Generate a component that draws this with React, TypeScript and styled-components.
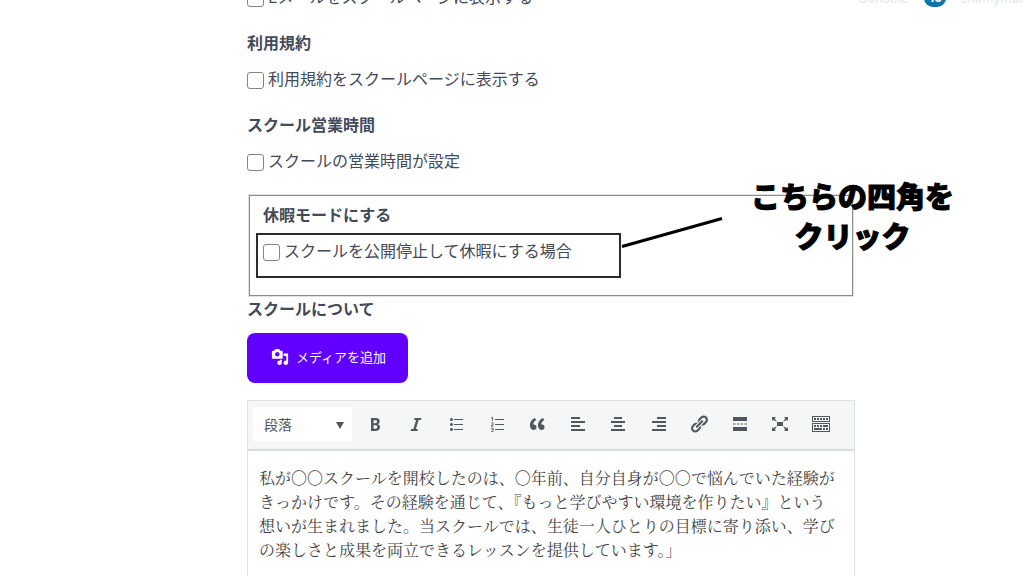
import React from "react";
import styled, { createGlobalStyle } from "styled-components";

const sans = `"Noto Sans CJK JP", "Noto Sans", sans-serif`;

const GlobalStyle = createGlobalStyle`
  *, *::before, *::after { box-sizing: border-box; }
  body { margin: 0; background: #fff; color: #434a5a; font: 16px/24px ${sans}; }
  button, select, input { font: inherit; color: inherit; }
`;

const Page = styled.div`
  position: relative;
  height: 100vh;
  overflow: hidden;
`;

const AccountBar = styled.header`
  position: absolute;
  top: -12px;
  left: 858px;
  display: flex;
  align-items: center;
  white-space: nowrap;
  color: #e6e6e6;
  font: 13px/20px Inter, sans-serif;
`;

const Badge = styled.span`
  width: 22px;
  height: 18px;
  margin: 0 14px 0 16px;
  border-radius: 9px;
  background: #0b76ae;
  color: #fff;
  text-align: center;
  font-size: 12px;
  font-weight: 700;
  line-height: 18px;
`;

const Form = styled.main`
  margin-top: -16px;
  padding: 0 169px 0 247px;
`;

const Group = styled.section`
  margin-bottom: 22px;
`;

const Heading = styled.h2`
  margin: 0;
  font-size: 16px;
  line-height: 24px;
  font-weight: 700;
`;

const CheckLabel = styled.label`
  display: flex;
  align-items: center;
  gap: 4px;
  height: 24px;
  white-space: nowrap;
`;

const CheckBox = styled.input`
  appearance: none;
  flex: none;
  width: 17px;
  height: 17px;
  margin: 5px 0 0;
  border: 1px solid #858585;
  border-radius: 3px;
  background: #fff;
`;

const SpacedRow = styled.div`
  margin-top: 12px;
`;

const VacationPanel = styled.section`
  position: relative;
  margin: 23px 2px 0;
  padding: 6px 7px 17px 6px;
  border: 1px solid #8c8c8c;
  outline: 1px solid #e2e2e2;

  ${Heading} { padding-left: 7px; }
`;

const Target = styled.div`
  position: relative;
  width: 365px;
  height: 45px;
  margin-top: 7px;
  padding: 3px 5px;
  border: 2px solid #2c2c2c;
`;

const Pointer = styled.svg`
  position: absolute;
  left: 363px;
  top: -20px;
`;

const Callout = styled.p`
  position: absolute;
  top: -21px;
  right: -102px;
  margin: 0;
  color: #000;
  text-align: center;
  white-space: nowrap;
  font-size: 29px;
  line-height: 40px;
  font-weight: 900;
  -webkit-text-stroke: 1px #000;
`;

const MediaButton = styled.button`
  display: flex;
  align-items: center;
  gap: 7px;
  height: 50px;
  margin: 13px 0 17px;
  padding: 0 22px 2px 24px;
  border: 0;
  border-radius: 8px;
  background: #6200ff;
  color: #fff;
  font-size: 13px;
`;

const Editor = styled.section`
  border: 1px solid #dfe1e2;
`;

const Toolbar = styled.div`
  display: flex;
  align-items: center;
  height: 50px;
  padding: 0 13px 2px 5px;
  border-bottom: 2px solid #d9dcdd;
  background: #f5f7f7;
`;

const FormatField = styled.div`
  position: relative;
  flex: none;
  width: 99px;
  margin-right: 3px;
`;

const FormatSelect = styled.select`
  appearance: none;
  display: block;
  width: 100%;
  height: 34px;
  padding: 0 11px;
  border: 0;
  background: #fff;
  color: #50575e;
  font-size: 14px;
`;

const Caret = styled.svg`
  position: absolute;
  right: 8px;
  top: 15px;
  pointer-events: none;
`;

const Tools = styled.div`
  display: grid;
  flex: 1;
  grid-template-columns: repeat(12, 1fr);
`;

const Tool = styled.button`
  display: grid;
  place-items: center;
  height: 34px;
  padding: 0;
  border: 0;
  background: none;
  color: #50575e;
`;

const Body = styled.p`
  min-height: 160px;
  margin: 0;
  padding: 15px 11px;
  color: #444;
  font: 16px/24px "Noto Serif CJK JP", "Noto Serif JP", "Noto Sans CJK JP", serif;
  white-space: nowrap;
`;

const tools: { name: string; path: string }[] = [
  { name: "太字", path: "M6 4v13h4.54c1.37 0 2.46-.33 3.26-1 .8-.66 1.2-1.58 1.2-2.77 0-.84-.17-1.51-.51-2.01s-.9-.85-1.67-1.03v-.09c.57-.1 1.02-.4 1.36-.9s.51-1.13.51-1.91c0-1.14-.39-1.98-1.17-2.5C12.75 4.26 11.5 4 9.78 4H6zm2.57 5.15V6.26h1.36c.73 0 1.27.11 1.61.32.34.22.51.58.51 1.07 0 .54-.16.92-.47 1.15s-.82.35-1.51.35h-1.5zm0 2.19h1.6c1.44 0 2.16.53 2.16 1.61 0 .6-.17 1.05-.51 1.34s-.86.43-1.57.43H8.57v-3.38z" },
  { name: "イタリック", path: "M14.78 6h-2.13l-2.8 9h2.12l-.62 2H4.6l.62-2h2.14l2.8-9H8.03l.62-2h6.75z" },
  { name: "番号なしリスト", path: "M5.5 7C4.67 7 4 6.33 4 5.5 4 4.68 4.67 4 5.5 4 6.32 4 7 4.68 7 5.5 7 6.33 6.32 7 5.5 7zM8 5h9v1H8V5zm-2.5 7c-.83 0-1.5-.67-1.5-1.5C4 9.68 4.67 9 5.5 9c.82 0 1.5.68 1.5 1.5 0 .83-.68 1.5-1.5 1.5zM8 10h9v1H8v-1zm-2.5 7c-.83 0-1.5-.67-1.5-1.5 0-.82.67-1.5 1.5-1.5.82 0 1.5.68 1.5 1.5 0 .83-.68 1.5-1.5 1.5zM8 15h9v1H8v-1z" },
  { name: "番号付きリスト", path: "M8 5h9v1H8zM8 10h9v1H8zM8 15h9v1H8zM5 3h.9v4H5V4.2l-.7.4-.3-.6zM4 8.5h2.4v2L5 11.7h1.5v.7H4v-.9l1.6-1.4v-.9H4zM4 13.7h2.5v4H4V17h1.7v-.9H4.4v-.7h1.3v-1H4z" },
  { name: "引用", path: "M9.49 13.22c0-.74-.2-1.38-.61-1.9-.62-.78-1.83-.88-2.53-.72-.29-1.65 1.11-3.75 2.92-4.65L7.88 4c-2.73 1.3-5.42 4.28-4.96 8.05C3.21 14.43 4.59 16 6.54 16c.85 0 1.56-.25 2.12-.75s.83-1.18.83-2.03zm8.05 0c0-.74-.2-1.38-.61-1.9-.63-.78-1.83-.88-2.53-.72-.29-1.65 1.11-3.75 2.92-4.65L15.93 4c-2.73 1.3-5.41 4.28-4.95 8.05.29 2.38 1.66 3.95 3.61 3.95.85 0 1.56-.25 2.12-.75s.83-1.18.83-2.03z" },
  { name: "左寄せ", path: "M12 5V3H3v2h9zm5 4V7H3v2h14zm-5 4v-2H3v2h9zm5 4v-2H3v2h14z" },
  { name: "中央揃え", path: "M14 5V3H6v2h8zm3 4V7H3v2h14zm-3 4v-2H6v2h8zm3 4v-2H3v2h14z" },
  { name: "右寄せ", path: "M17 5V3H8v2h9zm0 4V7H3v2h14zm0 4v-2H8v2h9zm0 4v-2H3v2h14z" },
  { name: "リンク", path: "M17.74 2.76c1.68 1.69 1.68 4.41 0 6.1l-1.53 1.52c-1.12 1.12-2.7 1.47-4.14 1.09l2.62-2.61.76-.77.76-.76c.84-.84.84-2.2 0-3.04-.84-.85-2.2-.85-3.04 0l-.77.76-3.38 3.38c-.37-1.44-.02-3.02 1.1-4.14l1.52-1.53c1.69-1.68 4.42-1.68 6.1 0zM8.59 13.43l5.34-5.34c.42-.42.42-1.1 0-1.52-.44-.43-1.13-.39-1.53 0l-5.33 5.34c-.42.42-.42 1.1 0 1.52.44.43 1.13.39 1.52 0zm-.76 2.29l4.14-4.15c.38 1.44.03 3.02-1.09 4.14l-1.52 1.53c-1.69 1.68-4.41 1.68-6.1 0-1.68-1.68-1.68-4.42 0-6.1l1.53-1.52c1.12-1.12 2.7-1.47 4.14-1.1l-4.14 4.15c-.85.84-.85 2.2 0 3.05.84.84 2.2.84 3.04 0z" },
  { name: "続きを読む", path: "M17 7V3H3v4h14zM5.5 10.6V9.4H3v1.2zM9.3 10.6V9.4H7v1.2zM13 10.6V9.4h-2.3v1.2zM17 10.6V9.4h-2.5v1.2zM17 17v-4H3v4h14z" },
  { name: "全画面", path: "M7 8h6v4H7zm-5 5v4h4l-1.2-1.2L7 12l-3.8 2.2M14 17h4v-4l-1.2 1.2L13 12l2.2 3.8M14 3l1.3 1.3L13 8l3.8-2.2L18 7V3M6 3H2v4l1.2-1.2L7 8 4.7 4.3" },
  { name: "ツールバー切り替え", path: "M19 2v6H1V2h18zm-1 5V3H2v4h16zM5 4v2H3V4h2zm3 0v2H6V4h2zm3 0v2H9V4h2zm3 0v2h-2V4h2zm3 0v2h-2V4h2zm2 5v9H1V9h18zm-1 8v-7H2v7h16zM5 11v2H3v-2h2zm3 0v2H6v-2h2zm3 0v2H9v-2h2zm6 0v2h-5v-2h5zm-6 3v2H3v-2h8zm3 0v2h-2v-2h2zm3 0v2h-2v-2h2z" },
];

const mediaPath =
  "M13 11V4c0-.55-.45-1-1-1h-1.67L9 1H5L3.67 3H2c-.55 0-1 .45-1 1v7c0 .55.45 1 1 1h10c.55 0 1-.45 1-1zM7 4.5c1.38 0 2.5 1.12 2.5 2.5S8.38 9.5 7 9.5 4.5 8.38 4.5 7 5.62 4.5 7 4.5zM14 6h5v10.5c0 1.38-1.12 2.5-2.5 2.5S14 17.88 14 16.5s1.12-2.5 2.5-2.5c.17 0 .34.02.5.05V9h-3V6zm-4 8.05V13h2v3.5c0 1.38-1.12 2.5-2.5 2.5S7 17.88 7 16.5 8.12 14 9.5 14c.17 0 .34.02.5.05z";

function Icon({ path, size = 20 }: { path: string; size?: number }) {
  return (
    <svg width={size} height={size} viewBox="0 0 20 20" fill="currentColor" aria-hidden="true">
      <path d={path} />
    </svg>
  );
}

function Check({ children }: { children: React.ReactNode }) {
  return (
    <CheckLabel>
      <CheckBox type="checkbox" />
      <span>{children}</span>
    </CheckLabel>
  );
}

export default function App() {
  return (
    <Page>
      <GlobalStyle />
      <AccountBar>
        <span>Console</span>
        <Badge>16</Badge>
        <span>shinnymar</span>
      </AccountBar>
      <Form>
        <Group>
          <Check>Eメールをスクールページに表示する</Check>
        </Group>
        <Group>
          <Heading>利用規約</Heading>
          <SpacedRow>
            <Check>利用規約をスクールページに表示する</Check>
          </SpacedRow>
        </Group>
        <Group>
          <Heading>スクール営業時間</Heading>
          <SpacedRow>
            <Check>スクールの営業時間が設定</Check>
          </SpacedRow>
        </Group>
        <VacationPanel>
          <Heading>休暇モードにする</Heading>
          <Target>
            <Check>スクールを公開停止して休暇にする場合</Check>
            <Pointer width="104" height="36" viewBox="0 0 104 36" aria-hidden="true">
              <path d="M1 31.5L101 3.5" stroke="#000" strokeWidth="3" />
            </Pointer>
          </Target>
          <Callout>
            こちらの四角を
            <br />
            クリック
          </Callout>
        </VacationPanel>
        <Heading>スクールについて</Heading>
        <MediaButton type="button">
          <Icon path={mediaPath} size={18} />
          メディアを追加
        </MediaButton>
        <Editor>
          <Toolbar>
            <FormatField>
              <FormatSelect aria-label="書式" defaultValue="p">
                <option value="p">段落</option>
              </FormatSelect>
              <Caret width="8" height="7" viewBox="0 0 8 7" aria-hidden="true">
                <path d="M0 0h8L4 7z" fill="#50575e" />
              </Caret>
            </FormatField>
            <Tools>
              {tools.map((tool) => (
                <Tool key={tool.name} type="button" aria-label={tool.name}>
                  <Icon path={tool.path} />
                </Tool>
              ))}
            </Tools>
          </Toolbar>
          <Body>
            私が〇〇スクールを開校したのは、〇年前、自分自身が〇〇で悩んでいた経験が
            <br />
            きっかけです。その経験を通じて、『もっと学びやすい環境を作りたい』という
            <br />
            想いが生まれました。当スクールでは、生徒一人ひとりの目標に寄り添い、学び
            <br />
            の楽しさと成果を両立できるレッスンを提供しています。」
          </Body>
        </Editor>
      </Form>
    </Page>
  );
}
